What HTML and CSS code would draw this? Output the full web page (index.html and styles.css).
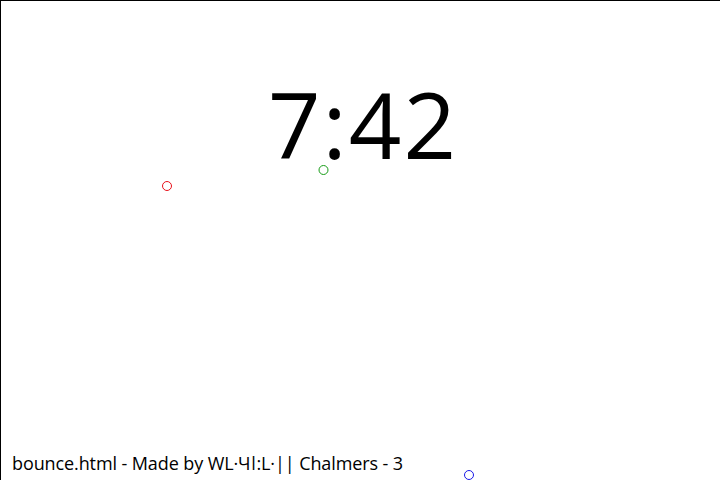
FILE: index.html
```html
<!DOCTYPE html>
<html>
<head>
<meta charset="utf-8">
<title>bounce.html</title>
<link rel="stylesheet" href="styles.css">
</head>
<body>
<div class="stage">
  <div class="clock">7:42</div>
  <div class="footer">bounce.html - Made by WL·Чǀ:L·|| Chalmers - 3</div>
  <svg class="balls" width="720" height="480" viewBox="0 0 720 480">
    <circle cx="167" cy="186" r="4.5" fill="none" stroke="#e8101a" stroke-width="1"/>
    <circle cx="323.5" cy="170" r="4.5" fill="none" stroke="#169c16" stroke-width="1"/>
    <circle cx="469" cy="475" r="4.5" fill="none" stroke="#1a1ae8" stroke-width="1"/>
  </svg>
</div>
</body>
</html>
```
FILE: styles.css
```css
html, body {
  margin: 0;
  padding: 0;
  background: #fff;
  overflow: hidden;
}
.stage {
  position: relative;
  width: 720px;
  height: 480px;
  box-sizing: border-box;
  border-left: 1px solid #000;
  border-top: 1px solid #000;
  display: flex;
  flex-direction: column;
  justify-content: space-between;
  font-family: "Open Sans", "Noto Sans", sans-serif;
  color: #000;
}
.clock {
  text-align: center;
  font-size: 92px;
  font-weight: 500;
  letter-spacing: 2px;
  line-height: 1;
  padding-top: 77px;
  padding-left: 5px;
}
.footer {
  font-size: 18px;
  line-height: 1;
  padding-left: 11px;
  padding-bottom: 8px;
  letter-spacing: -0.1px;
}
.balls {
  position: absolute;
  left: -1px;
  top: -1px;
  pointer-events: none;
}
```
